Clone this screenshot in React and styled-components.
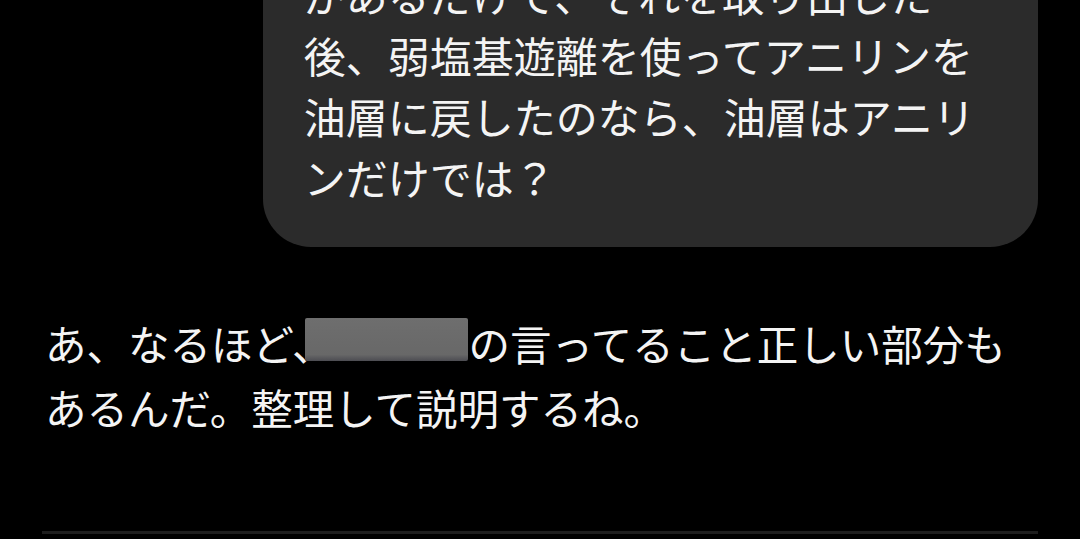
import React from "react"
import styled, { createGlobalStyle } from "styled-components"

const GlobalStyle = createGlobalStyle`
  html, body {
    margin: 0;
    padding: 0;
    background: #000;
  }
  body {
    font-family: "Noto Sans CJK JP", "Noto Sans", sans-serif;
    color: #f4f4f4;
  }
`

const Screen = styled.div`
  height: 539px;
  overflow: hidden;
  display: flex;
  flex-direction: column;
  justify-content: flex-end;
  padding: 0 42px 5px;
  box-sizing: border-box;
`

const UserRow = styled.div`
  display: flex;
  justify-content: flex-end;
  flex-shrink: 0;
`

const Bubble = styled.div`
  background: #2b2b2b;
  border-radius: 48px;
  padding: 20px 63px 40px 41px;
  font-size: 42px;
  line-height: 61px;
`

const Line = styled.div`
  white-space: nowrap;
`

const Reply = styled.div`
  margin: 64px 0 0 3px;
  font-size: 41.5px;
  line-height: 64px;
  flex-shrink: 0;
`

const Redacted = styled.span`
  position: relative;
  display: inline-block;
  width: 135px;
  height: 43px;
  vertical-align: baseline;

  &::after {
    content: "";
    position: absolute;
    top: 0;
    bottom: 0;
    left: -28px;
    right: 0;
    border-radius: 2px;
    background: linear-gradient(#6e6e6e, #686868 85%, #4c4c52);
  }
`

const Divider = styled.div`
  margin-top: 92px;
  height: 3px;
  background: #1e1e1e;
  flex-shrink: 0;
`

const userLines = [
  "油層にはアニリン塩酸塩",
  "があるだけで、それを取り出した",
  "後、弱塩基遊離を使ってアニリンを",
  "油層に戻したのなら、油層はアニリ",
  "ンだけでは？",
]

const App = () => (
  <>
    <GlobalStyle />
    <Screen>
      <UserRow>
        <Bubble>
          {userLines.map((l) => (
            <Line key={l}>{l}</Line>
          ))}
        </Bubble>
      </UserRow>
      <Reply>
        <Line>
          あ、なるほど、<Redacted />の言ってること正しい部分も
        </Line>
        <Line>あるんだ。整理して説明するね。</Line>
      </Reply>
      <Divider />
    </Screen>
  </>
)

export default App
